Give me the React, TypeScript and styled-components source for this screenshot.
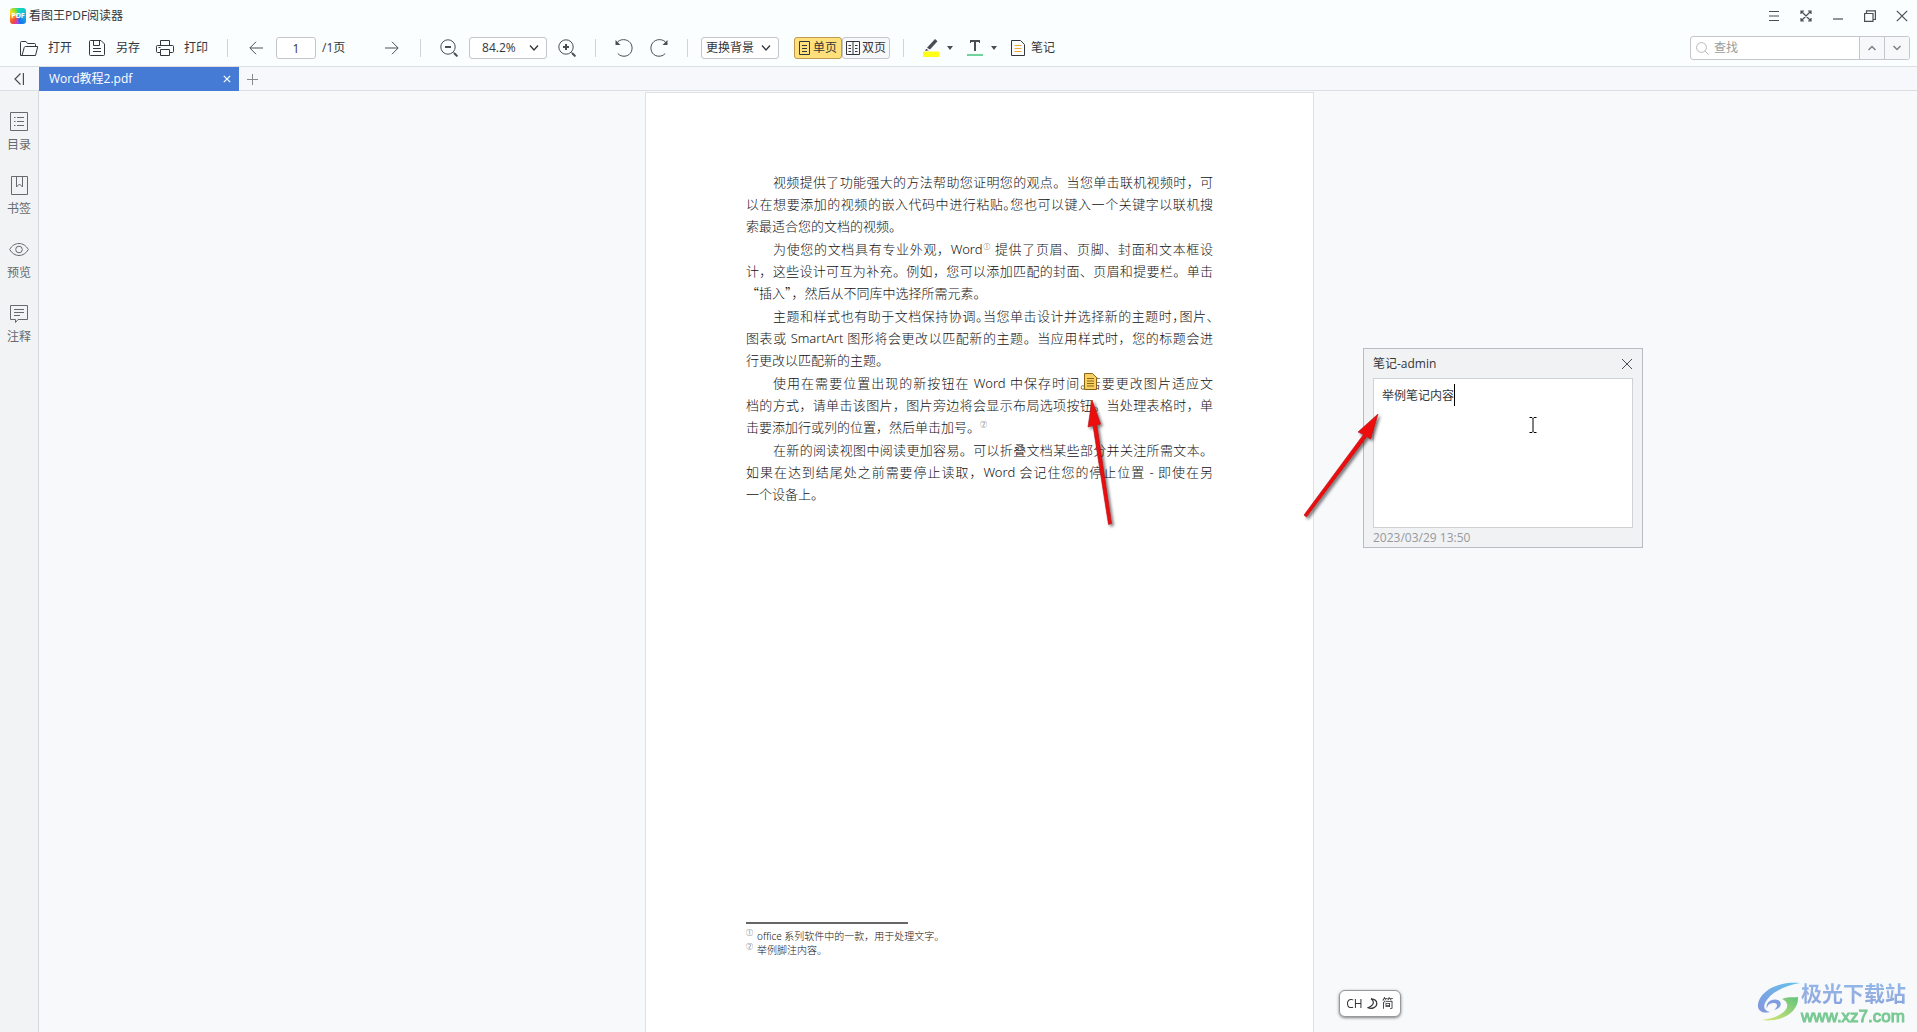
import React, { useState } from "react";
import styled, { createGlobalStyle } from "styled-components";

const ink = "#4a4e54";
const line = "#dcdfe2";

const GlobalStyle = createGlobalStyle`
  *, *::before, *::after { box-sizing: border-box; }
  body {
    margin: 0;
    font-family: "Open Sans", "Noto Sans CJK SC", sans-serif;
    font-size: 12px;
    line-height: 16px;
    color: #33363a;
  }
  button, input, select, textarea { font: inherit; color: inherit; margin: 0; }
  button { border: 0; background: none; padding: 0; cursor: pointer; }
  svg { display: block; flex: none; }
`;

const Shell = styled.div`
  display: flex;
  flex-direction: column;
  height: 100vh;
  overflow: hidden;
  background: #f8f9fb;
`;

const TopArea = styled.header`
  background: #fafeff;
  border-bottom: 1px solid ${line};
`;

const TitleBar = styled.div`
  display: flex;
  align-items: center;
  height: 32px;
  padding: 0 8px 0 10px;
`;

const AppMark = styled.span`
  display: grid;
  place-items: center;
  width: 16px;
  height: 16px;
  border-radius: 3px;
  background: conic-gradient(#16d8b0, #10b4f0 25%, #1673e6 45%, #c23fe0 52%, #f2453c 60%, #ff8a1e 72%, #ffe11a 82%, #7fdc3c 94%, #16d8b0);
  color: #fff;
  font-size: 7px;
  line-height: 8px;
  font-weight: 700;
`;

const AppName = styled.h1`
  margin: 0 auto 0 3px;
  font-size: 12px;
  font-weight: 400;
`;

const WindowControls = styled.div`
  display: flex;
  gap: 17px;
`;

const IconButton = styled.button<{ $w?: number }>`
  display: flex;
  align-items: center;
  justify-content: center;
  width: ${(p) => p.$w ?? 18}px;
  height: 18px;
  color: ${ink};
`;

const Toolbar = styled.div`
  display: flex;
  align-items: center;
  height: 34px;
  padding: 0 7px 2px 20px;
`;

const Group = styled.div<{ $gap: number }>`
  display: flex;
  align-items: center;
  gap: ${(p) => p.$gap}px;
`;

const Divider = styled.span<{ $before?: number; $after?: number }>`
  width: 1px;
  height: 18px;
  margin: 0 ${(p) => p.$after ?? 19}px 0 ${(p) => p.$before ?? 19}px;
  background: #cfd4d9;
`;

const ToolButton = styled.button<{ $gap: number }>`
  display: flex;
  align-items: center;
  gap: ${(p) => p.$gap}px;
  white-space: nowrap;
`;

const PageBox = styled.label`
  display: flex;
  align-items: center;
  gap: 6px;
  width: 96px;
`;

const PageInput = styled.input`
  width: 40px;
  height: 22px;
  padding: 0;
  border: 1px solid #c3c7cb;
  border-radius: 3px;
  background: #fff;
  text-align: center;
`;

const SelectBox = styled.span`
  display: grid;
  align-items: center;
  justify-items: end;
  width: 78px;
  > * { grid-area: 1 / 1; }
  svg { margin-right: 8px; pointer-events: none; }
`;

const Select = styled.select<{ $pad: number }>`
  appearance: none;
  width: 100%;
  height: 22px;
  padding: 0 0 0 ${(p) => p.$pad}px;
  border: 1px solid #c3c7cb;
  border-radius: 3px;
  background: #fff;
`;

const Segments = styled.div`
  display: flex;
  margin-left: 15px;
`;

const Segment = styled.button<{ $on: boolean }>`
  display: flex;
  align-items: center;
  justify-content: center;
  gap: 2px;
  width: 48px;
  height: 22px;
  border: 1px solid ${(p) => (p.$on ? "#bd9a4c" : "#c3c7cb")};
  border-radius: 3px;
  background: ${(p) => (p.$on ? "#ffe07a" : "#f7f8fa")};
  white-space: nowrap;
`;

const Search = styled.form`
  display: flex;
  width: 220px;
  height: 24px;
  margin-left: auto;
  border: 1px solid #c3c7cb;
  border-radius: 3px;
  background: #fff;
  overflow: hidden;
`;

const SearchField = styled.label`
  display: flex;
  flex: 1;
  align-items: center;
  gap: 5px;
  min-width: 0;
  padding-left: 5px;
  color: #b4b8bc;
`;

const SearchInput = styled.input`
  flex: 1;
  min-width: 0;
  padding: 0;
  border: 0;
  outline: 0;
  background: none;
  &::placeholder { color: #979b9b; opacity: 1; }
`;

const SearchStep = styled.button`
  display: flex;
  align-items: center;
  justify-content: center;
  width: 25px;
  border-left: 1px solid #c3c7cb;
  background: #f7f8fa;
  color: #7c8084;
`;

const TabBar = styled.nav`
  display: flex;
  align-items: center;
  height: 24px;
  border-bottom: 1px solid ${line};
  background: #f7f8fb;
`;

const Collapse = styled.button`
  display: flex;
  justify-content: center;
  width: 39px;
  padding-right: 2px;
  color: ${ink};
`;

const Tab = styled.div`
  display: flex;
  align-items: center;
  justify-content: space-between;
  width: 200px;
  height: 24px;
  padding: 0 7px 0 10px;
  background: #457bd5;
  color: #fff;
  button { color: #fff; }
`;

const TabLink = styled.a`
  color: inherit;
  text-decoration: none;
`;

const NewTab = styled.button`
  padding: 0 7px;
  color: #85898d;
`;

const Main = styled.div`
  display: flex;
  flex: 1;
  min-height: 0;
`;

const Sidebar = styled.aside`
  display: flex;
  flex-direction: column;
  gap: 24px;
  width: 39px;
  padding-top: 21px;
  border-right: 1px solid #d3d6da;
  background: #f2f3f5;
`;

const SideItem = styled.button`
  display: flex;
  flex-direction: column;
  align-items: center;
  gap: 5px;
  height: 40px;
  width: 38px;
  color: #66696d;
`;

const Canvas = styled.main`
  flex: 1;
  display: flex;
  justify-content: center;
  align-items: flex-start;
  padding: 1px 0 0 3px;
  overflow: hidden;
`;

const Sheet = styled.article`
  position: relative;
  display: flex;
  flex: none;
  flex-direction: column;
  justify-content: space-between;
  width: 669px;
  aspect-ratio: 210 / 297;
  padding: 78px 100px 80px;
  border: 1px solid #dfe2e5;
  background: #fff;
  color: #111;
`;

const Body = styled.div`
  display: flex;
  flex-direction: column;
  gap: 1px;
  font-family: "Noto Sans", "Noto Sans CJK SC", sans-serif;
  font-size: 13px;
  line-height: 22px;
  font-weight: 300;
`;

const Paragraph = styled.p`
  margin: 0;
`;

const Row = styled.span<{ $indent?: boolean; $full?: boolean }>`
  display: block;
  height: 22px;
  padding-left: ${(p) => (p.$indent ? 27 : 0)}px;
  white-space: nowrap;
  text-align: justify;
  text-align-last: ${(p) => (p.$full ? "justify" : "left")};
`;

/* Punctuation set in half of its em box */
const Half = styled.span`
  font-family: "Noto Sans CJK SC", sans-serif;
  font-feature-settings: "halt";
`;

const Quote = styled.span`
  font-family: "Noto Sans CJK SC", sans-serif;
`;

const Mark = styled.sup`
  font-family: "Noto Sans CJK SC", sans-serif;
  font-size: 7px;
  line-height: 7px;
  color: #444;
`;

const Footnotes = styled.ol`
  margin: 0;
  padding: 0;
  list-style: none;
  font-family: "Noto Sans", "Noto Sans CJK SC", sans-serif;
  font-size: 10px;
  line-height: 14px;
  font-weight: 300;
  &::before {
    content: "";
    display: block;
    width: 162px;
    height: 2px;
    margin-bottom: 5px;
    background: #666;
  }
`;

const Footnote = styled.li`
  display: grid;
  grid-template-columns: 11px auto;
`;

const NotePin = styled.button`
  position: absolute;
  left: 438px;
  top: 280px;
`;

const NoteCard = styled.section`
  position: absolute;
  left: 717px;
  top: 255px;
  display: flex;
  flex-direction: column;
  width: 280px;
  height: 200px;
  padding: 0 9px;
  border: 1px solid #b9bcc0;
  background: #f1f2f4;
  color: #33363a;
`;

const NoteHead = styled.div`
  display: flex;
  flex: none;
  align-items: center;
  justify-content: space-between;
  height: 29px;
`;

const NoteField = styled.div`
  position: relative;
  flex: 1;
  display: flex;
`;

const NoteText = styled.textarea`
  flex: 1;
  padding: 9px 8px;
  border: 1px solid #cfd2d5;
  background: #fff;
  outline: 0;
  resize: none;
`;

const Caret = styled.span`
  position: absolute;
  left: 81px;
  top: 6px;
  width: 1px;
  height: 22px;
  background: #000;
`;

const NoteTime = styled.time`
  height: 19px;
  line-height: 19px;
  color: #96999d;
`;

const Overlay = styled.svg`
  position: absolute;
  left: 0;
  top: 0;
  overflow: visible;
  pointer-events: none;
`;

const InputMode = styled.div`
  position: fixed;
  right: 516px;
  bottom: 15px;
  display: flex;
  align-items: center;
  justify-content: center;
  gap: 4px;
  width: 62px;
  height: 27px;
  border: 1px solid #999;
  border-radius: 6px;
  background: #fff;
  box-shadow: 0 1px 3px rgba(0, 0, 0, 0.5);
`;

const Watermark = styled.a`
  position: fixed;
  right: 11px;
  bottom: 5px;
  display: flex;
  align-items: center;
  text-decoration: none;
`;

const SiteName = styled.span`
  display: block;
  font-family: "Noto Sans CJK SC", sans-serif;
  font-size: 21px;
  line-height: 30px;
  font-weight: 700;
  color: transparent;
  background: linear-gradient(#8abcec, #96aee2 60%, #7fa2de);
  background-clip: text;
`;

const SiteUrl = styled.span`
  display: block;
  font-family: "Liberation Sans", sans-serif;
  font-size: 17px;
  line-height: 20px;
  -webkit-text-stroke: 1px #78c993;
  color: #78c993;
`;

type IconProps = { w: number; h?: number; d?: string; sw?: number; children?: React.ReactNode };
const Icon = ({ w, h = w, d, sw = 1, children }: IconProps) => (
  <svg width={w} height={h} viewBox={`0 0 ${w} ${h}`} fill="none" stroke="currentColor" strokeWidth={sw} aria-hidden="true">
    {d && <path d={d} />}
    {children}
  </svg>
);

const Chevron = () => <Icon w={10} h={8} sw={1.3} d="M1 1.5 5 6 9 1.5" />;
const Drop = () => (
  <svg width="6" height="4" aria-hidden="true"><path d="M0 0H6L3 4Z" fill={ink} /></svg>
);

const fileTools = [
  { label: "打开", icon: <Icon w={18} d="M.5 16.500V3.500Q.5 2.500 1.500 2.500H6L7.500 4.500H14.500Q15.500 4.500 15.500 5.500V7.500M.5 16.500H15.500L17.800 7.500H5.500Q4.500 7.500 4.200 8.500L2 16.500" /> },
  { label: "另存", icon: <Icon w={18} d="M1.500 2.500Q1.500 1.500 2.500 1.500H13L16.500 5V15.500Q16.500 16.500 15.500 16.500H2.500Q1.500 16.500 1.500 15.500ZM5.500 1.500V6.500H11.500V1.500M5 9.500H13M5 12.500H13" /> },
  { label: "打印", icon: <Icon w={18} d="M4.500 6.500V1.500H13.500V6.500M4.500 13.500H1.500Q.5 13.500 .5 12.500V7.500Q.5 6.500 1.500 6.500H16.500Q17.500 6.500 17.500 7.500V12.500Q17.500 13.500 16.500 13.500H13.500M4.500 10.500H13.500V16.500H4.500ZM2.500 8.500H4.500" /> },
];

const sideTools = [
  { label: "目录", icon: <Icon w={20} d="M1.500 .5H18.500V18.500H1.500ZM5 5.500H6.500M8 5.500H15M5 9.500H6.500M8 9.500H15M5 13.500H6.500M8 13.500H15" /> },
  { label: "书签", icon: <Icon w={20} d="M2.500 .5H18.500V18.500H2.500ZM7.500 .5V11L10.500 8 13.500 11V.5" /> },
  { label: "预览", icon: <Icon w={20} d="M.7 9.500C5 1.500 15 1.500 19.300 9.500C15 17.500 5 17.500 .7 9.500Z"><circle cx="10" cy="9.500" r="3.300" /></Icon> },
  { label: "注释", icon: <Icon w={20} d="M1.500 1.500H18.500V15.500H9L6.500 18.500V15.500H1.500ZM5 5.500H15M5 8.500H15M5 11.500H11" /> },
];

const windowTools = [
  { label: "菜单", icon: <Icon w={12} sw={1.200} d="M1 1.500H11M1 6H11M1 10.500H11" /> },
  { label: "全屏", icon: <Icon w={12} sw={1.200} d="M1 4V1H4M8 1H11V4M11 8V11H8M4 11H1V8M1 1 11 11M11 1 1 11" /> },
  { label: "最小化", icon: <Icon w={12} sw={1.200} d="M1 9H11" /> },
  { label: "还原", icon: <Icon w={12} sw={1.200} d="M.6 3.500H9V11.400H.6ZM2.500 3V.8H11.400V9.500H9.500" /> },
  { label: "关闭", icon: <Icon w={12} sw={1.200} d="M.8.8 11.200 11.200M11.200.8.8 11.200" /> },
];

export default function App() {
  const [view, setView] = useState("single");
  return (
    <Shell>
      <GlobalStyle />
      <TopArea>
        <TitleBar>
          <AppMark>PDF</AppMark>
          <AppName>看图王PDF阅读器</AppName>
          <WindowControls>
            {windowTools.map((t) => (
              <IconButton key={t.label} $w={15} aria-label={t.label}>{t.icon}</IconButton>
            ))}
          </WindowControls>
        </TitleBar>
        <Toolbar>
          <Group $gap={16}>
            {fileTools.map((t) => (
              <ToolButton key={t.label} $gap={10}>{t.icon}{t.label}</ToolButton>
            ))}
          </Group>
          <Divider />
          <Group $gap={11}>
            <IconButton aria-label="上一页"><Icon w={14} d="M14 7H1M7 .8 .8 7 7 13.200" /></IconButton>
            <PageBox>
              <PageInput aria-label="页码" defaultValue="1" />
              /1页
            </PageBox>
            <IconButton aria-label="下一页"><Icon w={14} d="M0 7H13M7 .8 13.200 7 7 13.200" /></IconButton>
          </Group>
          <Divider />
          <Group $gap={11}>
            <IconButton aria-label="缩小">
              <Icon w={18} d="M13.500 13.500 17.300 17.300"><circle cx="8" cy="8" r="7.200" /><path d="M5 8H11M14 14 17.300 17.300" strokeWidth="2" /></Icon>
            </IconButton>
            <SelectBox>
              <Select $pad={12} aria-label="缩放比例" defaultValue="84.2%"><option>84.2%</option></Select>
              <Chevron />
            </SelectBox>
            <IconButton aria-label="放大">
              <Icon w={18} d="M13.500 13.500 17.300 17.300"><circle cx="8" cy="8" r="7.200" /><path d="M5 8H11M8 5V11M14 14 17.300 17.300" strokeWidth="2" /></Icon>
            </IconButton>
          </Group>
          <Divider />
          <Group $gap={17}>
            <IconButton aria-label="向左旋转">
              <Icon w={18} d="M1.500 4C5-.5 12-.5 15.500 4C19 9 16.500 16.500 10 17.200C7 17.400 4.500 16.500 2.800 14.500"><path d="M.5 1V6H5.500Z" fill="currentColor" stroke="none" /></Icon>
            </IconButton>
            <IconButton aria-label="向右旋转">
              <Icon w={18} d="M16.500 4C13-.5 6-.5 2.500 4C-1 9 1.500 16.500 8 17.200C11 17.400 13.500 16.500 15.200 14.500"><path d="M17.500 1V6H12.500Z" fill="currentColor" stroke="none" /></Icon>
            </IconButton>
          </Group>
          <Divider $after={13} />
          <SelectBox>
            <Select $pad={4} aria-label="更换背景"><option>更换背景</option></Select>
            <Chevron />
          </SelectBox>
          <Segments>
            <Segment $on={view === "single"} onClick={() => setView("single")}>
              <Icon w={12} h={14} d="M.5 .5H10.500V13.500H.5ZM3 4.500H8M3 7.500H8M3 10.500H8" />单页
            </Segment>
            <Segment $on={view === "double"} onClick={() => setView("double")}>
              <Icon w={14} d="M.5 .5H13.500V13.500H.5ZM7 .5V13.500M2.500 4.500H5M9 4.500H11.500M2.500 7.500H5M9 7.500H11.500M2.500 10.500H5M9 10.500H11.500" />双页
            </Segment>
          </Segments>
          <Divider $before={13} />
          <Group $gap={14}>
            <ToolButton $gap={8} aria-label="高亮">
              <svg width="16" height="18" aria-hidden="true">
                <path d="M0 12.500H16V18H0Z" fill="#ffff1a" />
                <path d="M12 0 14.500 2.200 7 10.500 4 8.800ZM3.200 9.700 5.800 11.300 2 12Z" fill={ink} />
              </svg>
              <Drop />
            </ToolButton>
            <ToolButton $gap={8} aria-label="文字标记">
              <svg width="16" height="18" aria-hidden="true">
                <path d="M3 1H13V4H12V3H9V12H7V3H4V4H3Z" fill={ink} />
                <path d="M0 15H16V17H0Z" fill="#6fd39c" />
              </svg>
              <Drop />
            </ToolButton>
            <ToolButton $gap={6}>
              <Icon w={14} h={16} d="M.5 .5H9.500L13.500 4.500V15.500H.5Z"><path d="M3.500 5.500H10.500M3.500 8.500H10.500M3.500 11.500H10.500" stroke="#eba83a" /></Icon>
              笔记
            </ToolButton>
          </Group>
          <Search onSubmit={(e) => e.preventDefault()}>
            <SearchField>
              <Icon w={13} d="M9.200 9.200 12.600 12.600"><circle cx="5.500" cy="5.500" r="4.900" /></Icon>
              <SearchInput type="text" aria-label="查找" placeholder="查找" />
            </SearchField>
            <SearchStep type="button" aria-label="查找上一个"><Icon w={8} h={6} sw={1.500} d="M.5 5 4 1.500 7.500 5" /></SearchStep>
            <SearchStep type="button" aria-label="查找下一个"><Icon w={8} h={6} sw={1.500} d="M.5 1 4 4.500 7.500 1" /></SearchStep>
          </Search>
        </Toolbar>
      </TopArea>
      <TabBar>
        <Collapse aria-label="收起侧栏"><Icon w={10} h={12} sw={1.200} d="M6.500 .5 1 6 6.500 11.500M9.400 0V12" /></Collapse>
        <Tab>
          <TabLink href="#doc">Word教程2.pdf</TabLink>
          <IconButton $w={10} aria-label="关闭标签"><Icon w={8} sw={1.200} d="M.8.8 7.200 7.200M7.200.8.8 7.200" /></IconButton>
        </Tab>
        <NewTab aria-label="新建标签"><Icon w={12} d="M6.500 1V12M1 6.500H12" /></NewTab>
      </TabBar>
      <Main>
        <Sidebar>
          {sideTools.map((t) => (
            <SideItem key={t.label}>{t.icon}{t.label}</SideItem>
          ))}
        </Sidebar>
        <Canvas>
          <Sheet id="doc" lang="zh-CN">
            <Body>
              <Paragraph>
                <Row $indent $full>视频提供了功能强大的方法帮助您证明您的观点。当您单击联机视频时，可</Row>
                <Row $full>以在想要添加的视频的嵌入代码中进行粘贴<Half>。</Half>您也可以键入一个关键字以联机搜</Row>
                <Row>索最适合您的文档的视频。</Row>
              </Paragraph>
              <Paragraph>
                <Row $indent $full>为使您的文档具有专业外观，Word<Mark>①</Mark> 提供了页眉、页脚、封面和文本框设</Row>
                <Row $full>计，这些设计可互为补充。例如，您可以添加匹配的封面、页眉和提要栏。单击</Row>
                <Row><Quote>“</Quote>插入<Half>”</Half>，然后从不同库中选择所需元素。</Row>
              </Paragraph>
              <Paragraph>
                <Row $indent $full>主题和样式也有助于文档保持协调<Half>。</Half>当您单击设计并选择新的主题时<Half>，</Half>图片<Half>、</Half></Row>
                <Row $full>图表或 SmartArt 图形将会更改以匹配新的主题。当应用样式时，您的标题会进</Row>
                <Row>行更改以匹配新的主题。</Row>
              </Paragraph>
              <Paragraph>
                <Row $indent $full>使用在需要位置出现的新按钮在 Word 中保存时间<Half>。</Half>若要更改图片适应文</Row>
                <Row $full>档的方式，请单击该图片，图片旁边将会显示布局选项按钮。当处理表格时，单</Row>
                <Row>击要添加行或列的位置，然后单击加号。<Mark>②</Mark></Row>
              </Paragraph>
              <Paragraph>
                <Row $indent $full>在新的阅读视图中阅读更加容易。可以折叠文档某些部分并关注所需文本。</Row>
                <Row $full>如果在达到结尾处之前需要停止读取，Word 会记住您的停止位置 - 即使在另</Row>
                <Row>一个设备上。</Row>
              </Paragraph>
            </Body>
            <Footnotes>
              <Footnote><Mark>①</Mark><span>office 系列软件中的一款，用于处理文字。</span></Footnote>
              <Footnote><Mark>②</Mark><span>举例脚注内容。</span></Footnote>
            </Footnotes>
            <NotePin aria-label="打开笔记">
              <svg width="13" height="17" aria-hidden="true">
                <path d="M.5 .5H8.500L12.500 4.500V16.500H.5Z" fill="#f8cf62" stroke="#8a6412" />
                <path d="M3 5.500H10M3 8H10M3 10.500H10M3 13H10" stroke="#8a6412" />
              </svg>
            </NotePin>
            <NoteCard>
              <NoteHead>
                <label htmlFor="note">笔记-admin</label>
                <IconButton $w={12} aria-label="关闭笔记"><Icon w={12} d="M1 1 11 11M11 1 1 11" /></IconButton>
              </NoteHead>
              <NoteField>
                <NoteText id="note" defaultValue="举例笔记内容" />
                <Caret />
              </NoteField>
              <NoteTime dateTime="2023-03-29T13:50">2023/03/29 13:50</NoteTime>
            </NoteCard>
            <Overlay width="1000" height="460" aria-hidden="true">
              <defs>
                <filter id="drop" x="-30%" y="-10%" width="180%" height="130%">
                  <feDropShadow dx="2" dy="2" stdDeviation="1.5" floodColor="#000" floodOpacity=".55" />
                </filter>
              </defs>
              <g filter="url(#drop)" fill="#ee0a10" stroke="#b00a10" strokeWidth=".6">
                <path d="M446 307 454.500 331 450.800 332 465.500 430.500 462.500 431.500 447 332.500 442 334Z" />
                <path d="M732 321 724.500 346 721 343.500 660.500 424 658 422 717.500 341.500 712 339Z" />
              </g>
              <path d="M883.500 324.500H886L887 325.500 888 324.500H890.500M887 325.500V338.500M883.500 339.500H886L887 338.500 888 339.500H890.500" fill="none" stroke="#000" />
            </Overlay>
          </Sheet>
        </Canvas>
      </Main>
      <InputMode>
        CH
        <Icon w={11} sw={1.200} d="M4 .8C7.500 3 7.500 7 1 9.800C5 11.500 9.800 9 9.800 5.500C9.800 3 7.500 1 4 .8Z" />
        简
      </InputMode>
      <Watermark href="#xz7">
        <svg width="44" height="40" viewBox="0 0 44 40" aria-hidden="true">
          <defs>
            <linearGradient id="sky" x1="1" y1="0" x2="0" y2="1">
              <stop offset="0" stopColor="#63c3ec" />
              <stop offset="1" stopColor="#8595dc" />
            </linearGradient>
            <linearGradient id="leaf" x1="1" y1="0" x2="0" y2="1">
              <stop offset="0" stopColor="#62c37c" />
              <stop offset="1" stopColor="#dbe774" />
            </linearGradient>
          </defs>
          <path d="M43 1C24 -1 4 7 1 22C0 29 6 32 13 30C8 29 6 26 8 21C13 11 26 4 43 1Z" fill="url(#sky)" />
          <path d="M10 27C8 20 15 16 21 18C26 20 24 27 17 28C21 25 21 21 17 21C13 21 10 23 10 27Z" fill="#7f9ddf" />
          <path d="M25 17C33 14 38 16 41 15C42 28 28 41 4 38C20 37 32 29 30 22C29 19 27 18 25 17Z" fill="url(#leaf)" />
        </svg>
        <span>
          <SiteName>极光下载站</SiteName>
          <SiteUrl>www.xz7.com</SiteUrl>
        </span>
      </Watermark>
    </Shell>
  );
}
